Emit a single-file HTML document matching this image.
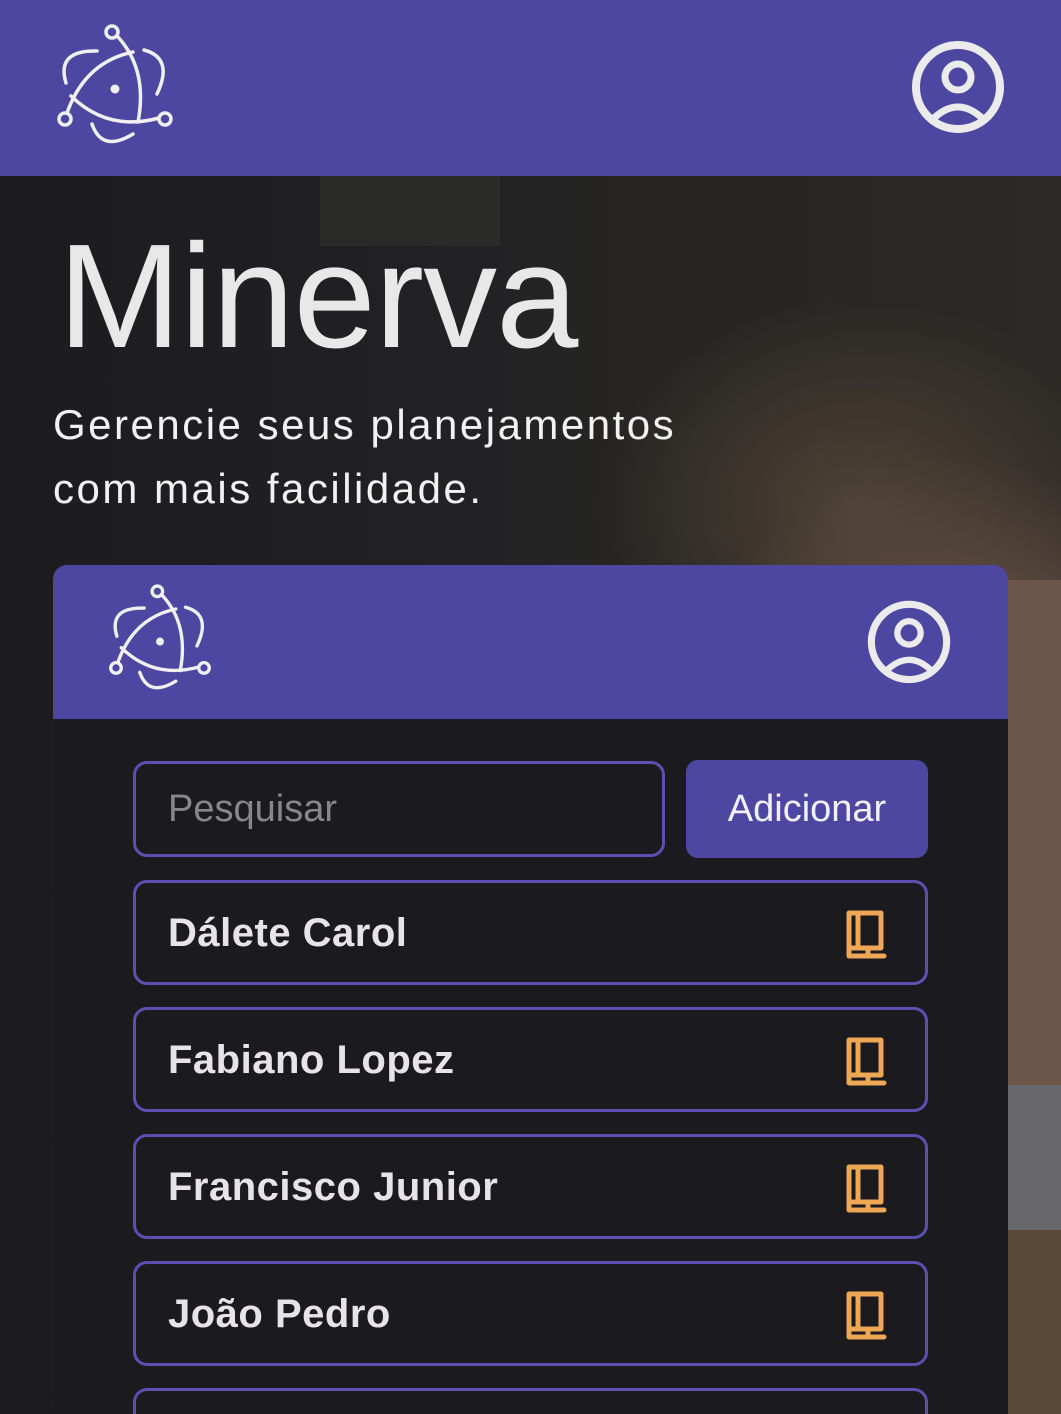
<!DOCTYPE html>
<html><head><meta charset="utf-8"><style>
*{margin:0;padding:0;box-sizing:border-box}
html{width:1061px;height:1414px;overflow:hidden}
body{width:1061px;height:1414px;overflow:hidden;background:#1e1e20;font-family:"Liberation Sans",sans-serif;position:relative}
.hdr{position:absolute;left:0;top:0;width:1061px;height:176px;background:#4e47a2}
.hero{position:absolute;left:0;top:176px;width:1061px;height:1238px;
background:
radial-gradient(ellipse 420px 480px at 960px 640px,#6a5548 0%,#5d4a3f 45%,rgba(60,50,44,0) 75%),
radial-gradient(ellipse 330px 260px at 860px 330px,#4e4235 0%,rgba(70,60,50,0) 80%),
linear-gradient(90deg,#1c1c1e 0%,#222224 45%,#262523 60%,#2c2926 100%)}
.blk{position:absolute;left:320px;top:176px;width:180px;height:70px;background:#34332d;opacity:.5}
.strip1{position:absolute;left:1008px;top:580px;width:53px;height:505px;background:#6b5649}
.strip2{position:absolute;left:1008px;top:1085px;width:53px;height:145px;background:#67666b}
.strip3{position:absolute;left:1008px;top:1230px;width:53px;height:184px;background:#5a4839}
.title{position:absolute;left:58px;top:212px;font-size:148px;color:#e8e8e8;line-height:170px;letter-spacing:-1px;font-weight:normal}
.sub{position:absolute;left:53px;top:393px;font-size:42px;color:#f2f2f2;line-height:64px;letter-spacing:2.5px}
.card{position:absolute;left:53px;top:565px;width:955px;height:849px;background:#1b1a1e;border-radius:14px 14px 0 0;overflow:hidden}
.chdr{height:154px;background:#4e47a2}
.inp{position:absolute;left:133px;top:761px;width:532px;height:96px;border:3px solid #5b50b1;border-radius:14px;color:#87868d;font-size:38px;padding-left:32px;line-height:90px}
.btn{position:absolute;left:686px;top:760px;width:242px;height:98px;background:#4e47a2;border-radius:12px;color:#f2f0ff;font-size:38px;text-align:center;line-height:98px}
.item{position:absolute;left:133px;width:795px;height:105px;border:3px solid #5b50b1;border-radius:14px;color:#e6e4e8;font-size:40px;font-weight:bold;padding-left:32px;line-height:101px;letter-spacing:.5px}
.item svg{position:absolute;left:708px;top:25px}
</style></head><body>
<div class="hdr"></div>
<div class="hero"></div>
<div class="blk"></div>
<div class="strip1"></div><div class="strip2"></div><div class="strip3"></div>

<svg style="position:absolute;left:40px;top:10px" width="150" height="150" viewBox="0 0 150 150" fill="none" stroke="#f0f0f0" stroke-width="3.5" stroke-linecap="round">
<path d="M78,27 Q108,60 98,112"/><path d="M93,42 Q45,52 27,103"/><path d="M31,86 Q68,122 119,108"/>
<path d="M57,41 Q16,40 26,73"/><path d="M104,40 Q134,48 117,84"/><path d="M52,114 Q62,143 93,124"/>
<circle cx="72" cy="22" r="6"/><circle cx="25" cy="109" r="6"/><circle cx="125" cy="109" r="6"/>
<circle cx="75" cy="79" r="4.5" fill="#f0f0f0" stroke="none"/></svg>

<svg style="position:absolute;left:910px;top:38px" width="96" height="96" viewBox="0 0 96 96" fill="none" stroke="#ebebeb" stroke-width="8">
<circle cx="48" cy="49" r="42"/><circle cx="48" cy="39" r="13" stroke-width="7"/><path d="M24,80 Q48,58 72,80" stroke-width="7"/></svg>

<div class="title">Minerva</div>
<div class="sub">Gerencie seus planejamentos<br>com mais facilidade.</div>

<div class="card"><div class="chdr"></div></div>

<svg style="position:absolute;left:94px;top:572px" width="132" height="132" viewBox="0 0 150 150" fill="none" stroke="#f0f0f0" stroke-width="3.8" stroke-linecap="round">
<path d="M78,27 Q108,60 98,112"/><path d="M93,42 Q45,52 27,103"/><path d="M31,86 Q68,122 119,108"/>
<path d="M57,41 Q16,40 26,73"/><path d="M104,40 Q134,48 117,84"/><path d="M52,114 Q62,143 93,124"/>
<circle cx="72" cy="22" r="6"/><circle cx="25" cy="109" r="6"/><circle cx="125" cy="109" r="6"/>
<circle cx="75" cy="79" r="4.5" fill="#f0f0f0" stroke="none"/></svg>

<svg style="position:absolute;left:866px;top:598px" width="86" height="86" viewBox="0 0 96 96" fill="none" stroke="#ebebeb" stroke-width="8">
<circle cx="48" cy="49" r="42"/><circle cx="48" cy="39" r="13" stroke-width="7"/><path d="M24,80 Q48,58 72,80" stroke-width="7"/></svg>

<div class="inp">Pesquisar</div>
<div class="btn">Adicionar</div>

<div class="item" style="top:880px">Dálete Carol<svg width="44" height="54" viewBox="0 0 44 54" fill="none" stroke="#eea755" stroke-width="5" stroke-linejoin="round" stroke-linecap="round"><path d="M5,5 H37 V40 H5 Z M14,6 V39 M5,40 V48 H40 M24,40 V48"/></svg></div>
<div class="item" style="top:1007px">Fabiano Lopez<svg width="44" height="54" viewBox="0 0 44 54" fill="none" stroke="#eea755" stroke-width="5" stroke-linejoin="round" stroke-linecap="round"><path d="M5,5 H37 V40 H5 Z M14,6 V39 M5,40 V48 H40 M24,40 V48"/></svg></div>
<div class="item" style="top:1134px">Francisco Junior<svg width="44" height="54" viewBox="0 0 44 54" fill="none" stroke="#eea755" stroke-width="5" stroke-linejoin="round" stroke-linecap="round"><path d="M5,5 H37 V40 H5 Z M14,6 V39 M5,40 V48 H40 M24,40 V48"/></svg></div>
<div class="item" style="top:1261px">João Pedro<svg width="44" height="54" viewBox="0 0 44 54" fill="none" stroke="#eea755" stroke-width="5" stroke-linejoin="round" stroke-linecap="round"><path d="M5,5 H37 V40 H5 Z M14,6 V39 M5,40 V48 H40 M24,40 V48"/></svg></div>
<div class="item" style="top:1388px;height:26px;border-bottom:none;border-radius:14px 14px 0 0"></div>
</body></html>
